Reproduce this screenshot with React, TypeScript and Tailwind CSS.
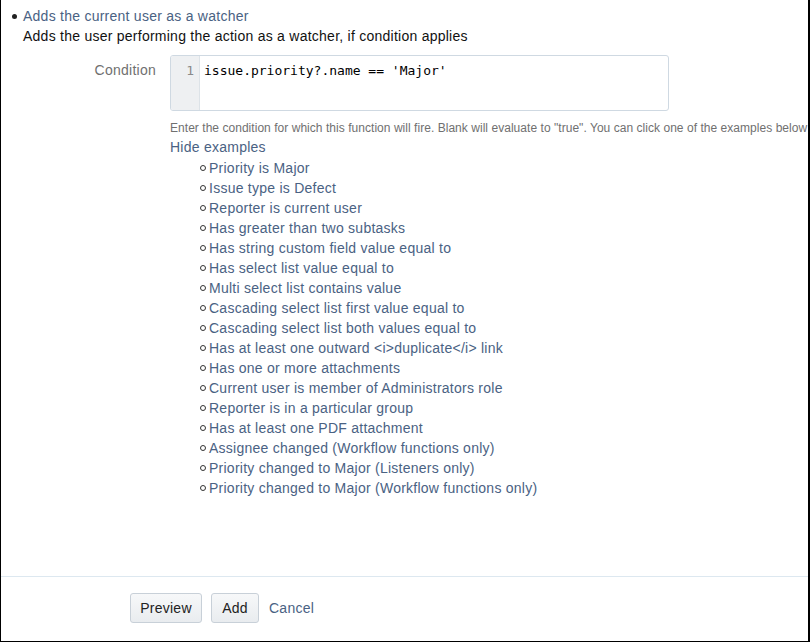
import React from 'react';

const examples = [
  'Priority is Major',
  'Issue type is Defect',
  'Reporter is current user',
  'Has greater than two subtasks',
  'Has string custom field value equal to',
  'Has select list value equal to',
  'Multi select list contains value',
  'Cascading select list first value equal to',
  'Cascading select list both values equal to',
  'Has at least one outward <i>duplicate</i> link',
  'Has one or more attachments',
  'Current user is member of Administrators role',
  'Reporter is in a particular group',
  'Has at least one PDF attachment',
  'Assignee changed (Workflow functions only)',
  'Priority changed to Major (Listeners only)',
  'Priority changed to Major (Workflow functions only)',
];

function App() {
  return (
    <div className="w-[810px] h-[642px] bg-white border-l border-r-2 border-b border-black flex flex-col overflow-hidden font-['Liberation_Sans',Arial,sans-serif] text-[14px] tracking-[0.25px] text-[#222]">
      <div className="flex-1 pt-[6px]">
        {/* Заголовок функции */}
        <div className="flex items-center h-[20px] pl-[11px]">
          <span className="w-[5px] h-[5px] rounded-full bg-[#222] mr-[6px]" />
          <span className="text-[#4a6283]">Adds the current user as a watcher</span>
        </div>
        <div className="h-[21px] leading-[21px] pl-[22px] text-[#111]">
          Adds the user performing the action as a watcher, if condition applies
        </div>

        {/* Поле условия */}
        <div className="flex mt-[8px]">
          <div className="w-[155px] text-right pt-[5px] leading-[20px] text-[#707070]">Condition</div>
          <div className="ml-[14px] flex-1 min-w-0">
            <div className="w-[499px] h-[56px] border border-[#cfd9e2] rounded-[3px] flex overflow-hidden">
              <div className="w-[29px] bg-[#eef0f2] border-r border-[#dde3e8] text-right pr-[5px] pt-[5px] leading-[20px] font-['DejaVu_Sans_Mono',monospace] text-[13px] tracking-normal text-[#8a8a8a]">
                1
              </div>
              <div className="pl-[4px] pt-[5px] leading-[20px] font-['DejaVu_Sans_Mono',monospace] text-[13px] tracking-normal text-black">
                issue.priority?.name == 'Major'
              </div>
            </div>
            <div className="mt-[8px] h-[18px] leading-[18px] text-[12px] tracking-[0.04px] text-[#707070] whitespace-nowrap">
              Enter the condition for which this function will fire. Blank will evaluate to "true". You can click one of the examples below
            </div>
            <div className="h-[21px] leading-[21px] text-[#4a6283]">Hide examples</div>
            <ul className="pl-[30px]">
              {examples.map((ex) => (
                <li key={ex} className="flex items-center h-[20px] text-[#4a6283]">
                  <span className="w-[6px] h-[6px] rounded-full border border-[#333] mr-[3px] shrink-0" />
                  <span className="whitespace-nowrap">{ex}</span>
                </li>
              ))}
            </ul>
          </div>
        </div>
      </div>

      {/* Кнопки */}
      <div className="h-[65px] border-t border-[#dde8f0] flex items-start pt-[16px] pl-[129px]">
        <button className="w-[72px] h-[30px] border border-[#c8d0d8] rounded-[3px] bg-gradient-to-b from-[#f7f8f9] to-[#e9ecef] text-[#222]">
          Preview
        </button>
        <button className="ml-[9px] w-[48px] h-[30px] border border-[#c8d0d8] rounded-[3px] bg-gradient-to-b from-[#f7f8f9] to-[#e9ecef] text-[#222]">
          Add
        </button>
        <span className="ml-[10px] h-[30px] leading-[30px] text-[#4a6283]">Cancel</span>
      </div>
    </div>
  );
}

export default App;
